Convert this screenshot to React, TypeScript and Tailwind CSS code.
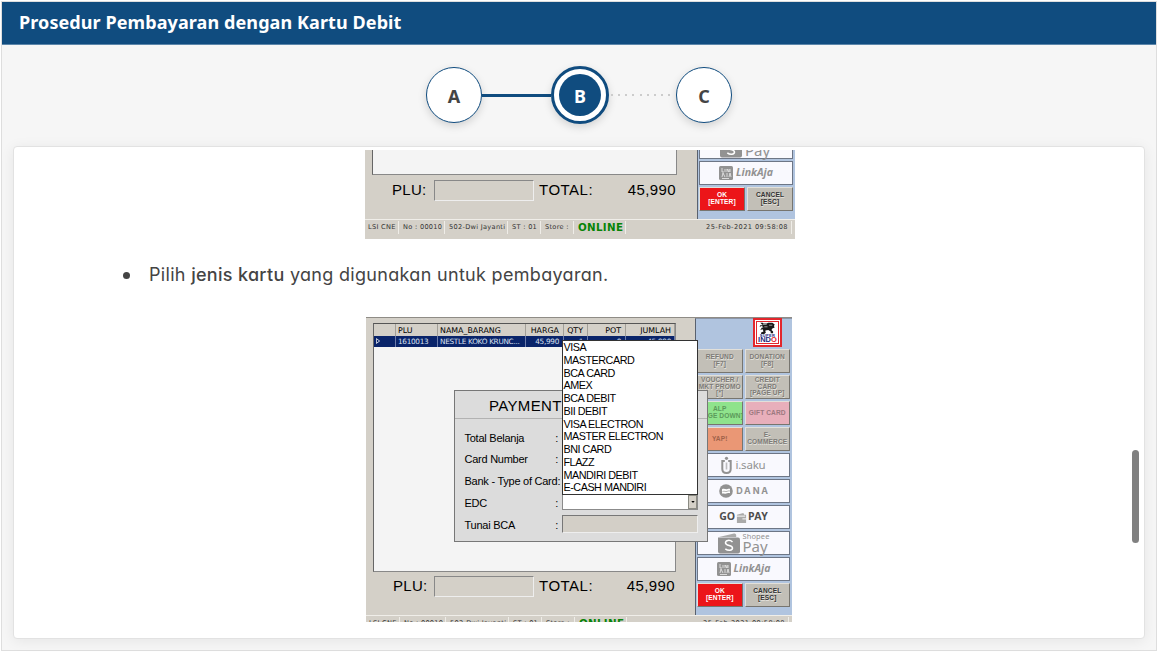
import React from "react";

const cards = [
  "VISA",
  "MASTERCARD",
  "BCA CARD",
  "AMEX",
  "BCA DEBIT",
  "BII DEBIT",
  "VISA ELECTRON",
  "MASTER ELECTRON",
  "BNI CARD",
  "FLAZZ",
  "MANDIRI DEBIT",
  "E-CASH MANDIRI",
];

function Key({ lines, tone = "gray" }: { lines: string[]; tone?: "gray" | "red" | "green" | "pink" | "orange" | "active" }) {
  const tones = {
    gray: "bg-[#c2bfb7] text-[#7d7b77] [text-shadow:0.5px_0.5px_0_#e4e2dc]",
    active: "bg-[#c2bfb7] text-[#333] [text-shadow:0.5px_0.5px_0_#e4e2dc]",
    red: "bg-[#ec1519] text-white",
    green: "bg-[#8fe38c] text-[#5c9a5b]",
    pink: "bg-[#e8afbb] text-[#9c7880]",
    orange: "bg-[#ea9775] text-[#a0624a]",
  };
  return (
    <div
      className={`flex h-6 min-w-0 flex-1 flex-col items-center justify-center border border-t-[#e2e0da] border-r-[#77756f] border-b-[#77756f] border-l-[#e2e0da] text-[6.6px] leading-[6.6px] font-bold tracking-[0.1px] whitespace-nowrap ${tones[tone]}`}
    >
      {lines.map((l) => (
        <span key={l}>{l}</span>
      ))}
    </div>
  );
}

function Wallet({ children }: { children: React.ReactNode }) {
  return (
    <div className="flex h-6 shrink-0 items-center justify-center border border-[#6d7686] bg-[#f9f9fe] whitespace-nowrap text-[#929292]">
      {children}
    </div>
  );
}

function SidePanel({ tail }: { tail: boolean }) {
  return (
    <div
      className={`flex shrink-0 flex-col border-l border-[#59616e] bg-[#b0c4df] pr-[2px] pl-[1px] ${
        tail ? "w-[98px] justify-end overflow-hidden pb-[8px]" : "w-[97px] border-t border-t-[#8b96a8]"
      }`}
    >
      {!tail && (
        <div className="flex h-[30px] shrink-0 justify-end pr-[8px]">
          <div className="-mt-px h-[29px] w-[29px] border-2 border-[#e3262c] bg-white p-px">
            <div className="flex h-full flex-col items-center border border-[#e3262c] bg-white">
              <svg viewBox="0 0 20 15" className="h-[12px] w-[19px] shrink-0" fill="#181818">
                <path d="M1 1h3l1 1h4l2-1h5l3 2-1 2 1 2-3 1-1 2 2 2v2h-3v-2l-3-2-4 1 1 2-2 2H2v-2l3-1-1-3-3 1 2-3h2L3 5 0 6l1-2h3z" />
                <path d="M4 3h5M6 6h4M12 4h4M8 11h3" stroke="white" strokeWidth="0.7" />
              </svg>
              <span className="text-[4px] leading-[3px] font-bold tracking-[0.3px] text-[#242a7d]">SUPER</span>
              <span className="text-[7.5px] leading-[6px] font-bold text-[#242a7d]">
                IND<span className="text-[#e3262c]">O</span>
              </span>
            </div>
          </div>
        </div>
      )}
      <div className="flex flex-col gap-[2px]">
        {!tail && (
          <>
            <div className="flex gap-[2px]">
              <Key lines={["REFUND", "[F7]"]} />
              <Key lines={["DONATION", "[F8]"]} />
            </div>
            <div className="flex gap-[2px]">
              <Key lines={["VOUCHER /", "MKT PROMO", "[*]"]} />
              <Key lines={["CREDIT", "CARD", "[PAGE UP]"]} />
            </div>
            <div className="flex gap-[2px]">
              <Key lines={["ALP", "[PAGE DOWN]"]} tone="green" />
              <Key lines={["GIFT CARD"]} tone="pink" />
            </div>
            <div className="flex gap-[2px]">
              <Key lines={["YAP!"]} tone="orange" />
              <Key lines={["E-", "COMMERCE"]} />
            </div>
            <Wallet>
              <svg viewBox="0 0 11 18" className="mr-[3px] h-[18px] w-[11px] shrink-0" fill="none" stroke="currentColor">
                <path d="M3.800 5H1.300v8q0 4 4.200 4t4.200-4V5H7.200" strokeWidth="2" />
                <path d="M5.500 6.500v7" strokeWidth="1.600" opacity="0.600" />
                <circle cx="5.500" cy="2.300" r="1.600" fill="currentColor" stroke="none" />
              </svg>
              <span className="font-['Noto_Sans'] text-[11.500px] tracking-[-0.200px]">i.saku</span>
            </Wallet>
            <Wallet>
              <svg viewBox="0 0 14 14" className="mr-[3px] h-[14px] w-[14px] shrink-0">
                <circle cx="7" cy="7" r="6.800" fill="currentColor" />
                <path d="M3 5.200c2-1.400 3.500.5 5 0s2-.6 3-.4v4.400c-2-.6-3.500 .8-5 .5s-2-.5-3-.1z" fill="white" />
                <path d="M3.500 7.600c2-1 3 .4 4.500-.2s2-.6 3-.4" fill="none" stroke="currentColor" strokeWidth="0.700" />
              </svg>
              <span className="-mr-[2px] font-['Inter'] text-[9px] font-bold tracking-[1.800px]">DANA</span>
            </Wallet>
            <Wallet>
              <span className="font-['Open_Sans'] text-[10.500px] font-bold tracking-[-0.200px] text-[#4d4d4d]">GO</span>
              <svg viewBox="0 0 12 12" className="mx-[1px] h-[11px] w-[11px] shrink-0">
                <path d="M1 3l7-2 1 2h2v9H1z" fill="#aaa" />
                <path d="M1 4.500h9M7 7.500h4" stroke="#fff" />
              </svg>
              <span className="font-['Open_Sans'] text-[10.500px] font-bold tracking-[-0.200px] text-[#4d4d4d]">PAY</span>
            </Wallet>
          </>
        )}
        <Wallet>
          <svg viewBox="0 0 22 21" className="mr-[3px] h-[21px] w-[22px] shrink-0">
            <path d="M1 4l15-3.500q2-.3 2.200 1.500V4z" fill="#aaa" />
            <path d="M0 4.500h20q2 0 2 2v12q0 2-2 2H2q-2 0-2-2z" fill="currentColor" />
            <path d="M14.500 9C12 6.500 7.500 7 7.500 9.800c0 3.600 7 2 7 5.200 0 2.800-4.500 3-7.200 .9" fill="none" stroke="white" strokeWidth="1.500" />
          </svg>
          <span className="flex flex-col font-['Noto_Sans']">
            {!tail && <span className="-mt-px text-[7.500px] leading-[8px] tracking-[0.100px]">Shopee</span>}
            <span className={`text-[15px] leading-[13px] ${tail ? "mt-[7px] pr-[2px]" : ""}`}>Pay</span>
          </span>
        </Wallet>
        <Wallet>
          <svg viewBox="0 0 14 14" className="mr-[3px] h-[14px] w-[14px] shrink-0">
            <rect width="14" height="14" rx="1.500" fill="currentColor" />
            <path d="M3 2v4h2M6 3v3M8 6V3l2 3V3M11 3v3M3 11l1-4 2 4M8 7v4M10 11l1-4 1 4M3 12.500h7" fill="none" stroke="#eee" strokeWidth="0.800" />
          </svg>
          <span className="font-['Open_Sans'] text-[10.500px] font-bold italic">LinkAja</span>
        </Wallet>
        <div className="flex gap-[2px]">
          <Key lines={["OK", "[ENTER]"]} tone="red" />
          <Key lines={["CANCEL", "[ESC]"]} tone="active" />
        </div>
      </div>
    </div>
  );
}

function StatusCell({ children, className }: { children: React.ReactNode; className: string }) {
  return <span className={`h-[13px] shrink-0 border-r border-[#efede8] ${className}`}>{children}</span>;
}

function PaymentDialog() {
  const labels = ["Total Belanja", "Card Number", "Bank - Type of Card", "EDC", "Tunai BCA"];
  return (
    <>
      <div className="absolute top-[73px] left-[88px] flex h-[152px] w-[254px] flex-col border border-[#777] bg-[#dcdcdc] text-black">
        <div className="h-[28px] border-b border-[#b2b2b2] pl-[34px] text-[15px] leading-[30px] tracking-[0.350px]">PAYMENT</div>
        <div className="flex pt-[8px] text-[11px] tracking-[-0.250px]">
          <div className="w-[107px] pl-[9.500px]">
            {labels.map((label) => (
              <div key={label} className="flex h-[21.800px] items-center justify-between pr-[4px] whitespace-nowrap">
                <span>{label}</span>
                <span>:</span>
              </div>
            ))}
          </div>
          <div className="flex flex-col pt-[67px]">
            <div className="flex h-[16px] w-[136px] justify-end border border-[#8b8b8b] bg-white">
              <div className="flex w-[9px] items-center justify-center border border-[#8b8b83] bg-[#d4d0c8]">
                <svg viewBox="0 0 5 3" className="h-[2px] w-[4px] shrink-0">
                  <path d="M0 0h5L2.500 3z" />
                </svg>
              </div>
            </div>
            <div className="mt-[5px] h-[18px] w-[136px] border border-t-[#777] border-r-[#eee] border-b-[#eee] border-l-[#777] bg-[#d3cfc7]" />
          </div>
        </div>
      </div>
      <div className="absolute top-[23px] left-[196px] h-[155px] w-[136px] border border-[#333] bg-white">
        {cards.map((c) => (
          <div key={c} className="h-[12.750px] pl-[0.500px] text-[10.800px] leading-[13px] tracking-[-0.480px] whitespace-nowrap text-black">
            {c}
          </div>
        ))}
      </div>
    </>
  );
}

const cols = [
  ["", "", "w-[22px]"],
  ["PLU", "1610013", "w-[42px] pl-[2px]"],
  ["NAMA_BARANG", "NESTLE KOKO KRUNC...", "w-[88px] pl-[2px]"],
  ["HARGA", "45,990", "w-[38px] text-right pr-[4px]"],
  ["QTY", "1", "w-[24px] text-right pr-[4px]"],
  ["POT", "0", "w-[38px] text-right pr-[4px]"],
  ["JUMLAH", "45,990", "w-[49px] text-right pr-[3px]"],
];

function ItemTable() {
  return (
    <>
      <div className="flex h-[12px] bg-[#d4d0c8] text-[7.900px] leading-[13px]">
        {cols.map((c, i) => (
          <div key={i} className={`shrink-0 border-r border-[#a29f98] ${c[2]}`}>{c[0]}</div>
        ))}
      </div>
      <div className="flex h-[11px] bg-[#0a246a] leading-[11px] text-[#dce1f0]">
        {cols.map((c, i) => (
          <div key={i} className={`shrink-0 border-r border-[#6c7cab] tracking-[-0.300px] ${c[2]}`}>
            {i === 0 ? (
              <svg viewBox="0 0 5 7" className="mt-[2px] ml-[2px] h-[6px] w-[4px]" fill="none" stroke="#fff">
                <path d="M.5.5v6l4-3z" />
              </svg>
            ) : (
              c[1]
            )}
          </div>
        ))}
      </div>
    </>
  );
}

function PosScreen({ tail = false }: { tail?: boolean }) {
  return (
    <div className="relative flex w-full shrink-0 flex-col bg-[#d4d0c8] font-['Liberation_Sans',sans-serif] text-black">
      <div className={`flex ${tail ? "h-[69px]" : "h-[298px] border-t border-[#8f8c86]"}`}>
        <div className={`flex flex-1 flex-col pl-[7px] ${tail ? "pr-[20px]" : "pt-[5px] pr-[19px]"}`}>
          <div
            className={`overflow-hidden border border-r-[#888] border-b-[#888] border-l-[#666] bg-[#f4f4f4] font-['DejaVu_Sans',sans-serif] text-[7.300px] whitespace-nowrap ${
              tail ? "h-[25px] border-t-0" : "h-[249px] border-t-[#555]"
            }`}
          >
            {!tail && <ItemTable />}
          </div>
          <div className={`flex h-[21px] items-center pl-[20px] text-[15px] tracking-[0.300px] ${tail ? "mt-[5px]" : "mt-[4px]"}`}>
            <span className={tail ? "w-[42px]" : "w-[41px]"}>PLU:</span>
            <div className="h-[21px] w-[100px] border border-t-[#888] border-r-[#eee] border-b-[#eee] border-l-[#888]" />
            <span className="ml-[5px] tracking-[0.500px]">TOTAL:</span>
            <span className="-mr-px ml-auto pr-[2px] tracking-[0.400px]">45,990</span>
          </div>
        </div>
        <SidePanel tail={tail} />
      </div>
      <div className="flex h-[20px] border-t border-[#f0eee9] pt-px pl-[3px] font-['DejaVu_Sans',sans-serif] text-[6.600px] leading-[13px] tracking-[0.300px] whitespace-nowrap text-[#333]">
        <StatusCell className="w-[31px]">LSI CNE</StatusCell>
        <StatusCell className="w-[46px] pl-[4px]">No : 00010</StatusCell>
        <StatusCell className="w-[63px] pl-[4px]">502-Dwi Jayanti</StatusCell>
        <StatusCell className="w-[33px] pl-[4px]">ST : 01</StatusCell>
        <StatusCell className="w-[33px] pl-[4px]">Store :</StatusCell>
        <StatusCell className="w-[52px] pl-[4px] text-[10.300px] font-bold text-[#078307]">ONLINE</StatusCell>
        <span className="mr-[3px] ml-auto h-[13px] border-r border-[#efede8] pr-[3px] tracking-[0.430px]">25-Feb-2021 09:58:08</span>
      </div>
      {!tail && <PaymentDialog />}
    </div>
  );
}

export default function App() {
  return (
    <div className="h-[652px] w-[1158px] overflow-hidden bg-white p-px font-['Noto_Sans',sans-serif]">
      <div className="flex h-[650px] w-[1156px] flex-col border border-[#dedede] bg-[#f6f6f6]">
        <header className="flex h-[43px] shrink-0 items-center border-b border-[#5c86aa] bg-[#104c7f] pb-px pl-[17px] text-[18px] font-bold tracking-[0.090px] text-white">
          <h1>Prosedur Pembayaran dengan Kartu Debit</h1>
        </header>
        <nav className="flex h-[100px] shrink-0 items-center justify-center text-[18px] leading-none font-bold text-[#444]">
          <div className="flex h-14 w-14 items-center justify-center rounded-full border border-[#104c7f] bg-white pt-px shadow-[0_3px_8px_rgba(0,0,0,0.15)]">A</div>
          <div className="h-[3px] w-[69px] bg-[#104c7f]" />
          <div className="flex h-[58px] w-[58px] items-center justify-center rounded-full border-[3px] border-[#104c7f] bg-white shadow-[0_3px_8px_rgba(0,0,0,0.15)]">
            <div className="flex h-[42px] w-[42px] items-center justify-center rounded-full bg-[#104c7f] pt-px text-white">B</div>
          </div>
          <div className="flex w-[67px] justify-between pr-[6px] pl-[2px]">
            {Array.from({ length: 9 }, (_, i) => (
              <i key={i} className="h-[2px] w-[2px] bg-[#ccc]" />
            ))}
          </div>
          <div className="flex h-14 w-14 items-center justify-center rounded-full border border-[#104c7f] bg-white pt-px shadow-[0_3px_8px_rgba(0,0,0,0.15)]">C</div>
        </nav>
        <main className="mt-px ml-[11px] flex h-[493px] w-[1132px] shrink-0 justify-between rounded-[4px] border border-[#e2e2e2] bg-white pt-[3px] shadow-[0_2px_14px_rgba(0,0,0,0.07)]">
          <div className="w-[1000px]">
            <div className="ml-[351px] flex h-[89px] w-[430px] flex-col overflow-hidden">
              <PosScreen tail />
            </div>
            <div className="flex h-[78px] items-center pb-[8px] pl-[109px] font-['Inter',sans-serif] text-[18px] text-[#444] [font-feature-settings:'cv11']">
              <i className="mt-[2px] mr-[19px] h-[7px] w-[7px] rounded-full bg-[#444]" />
              <p className="tracking-[0.310px] whitespace-nowrap">
                Pilih <span className="font-medium">jenis kartu</span> yang digunakan untuk pembayaran.
              </p>
            </div>
            <div className="ml-[352px] flex h-[305px] w-[426px] flex-col overflow-hidden">
              <PosScreen />
            </div>
          </div>
          <div className="mt-[300px] mr-[5px] h-[93px] w-[7px] rounded-full bg-[#808080]" />
        </main>
      </div>
    </div>
  );
}
